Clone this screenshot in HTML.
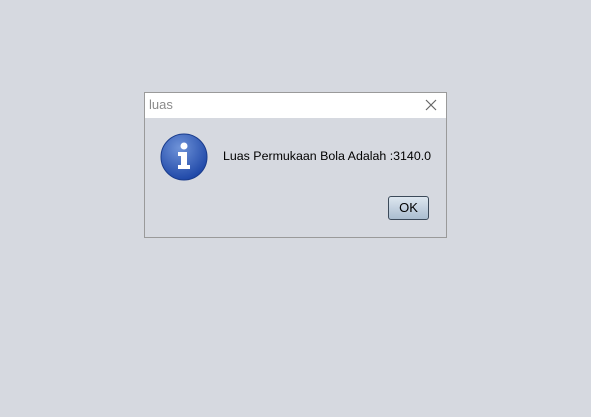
<!DOCTYPE html>
<html><head><style>
body{margin:0;width:591px;height:417px;background:#d6d9e0;position:relative;overflow:hidden;font-family:"Liberation Sans",sans-serif}
.dlg{position:absolute;left:144px;top:92px;width:301px;height:144px;border:1px solid #9a9a9a;background:#d6d9e0}
.tb{position:absolute;left:0;top:0;width:301px;height:25px;background:#fff}
.tt{position:absolute;left:4px;top:4px;font-size:13px;color:#8a8a8a}
.msg{position:absolute;left:78px;top:56px;font-size:12.4px;color:#000}
.ok{position:absolute;left:243px;top:103px;width:41px;height:24px;border:1px solid #3c4a5a;border-radius:3px;background:linear-gradient(#dde6ef,#aabdd0);font-size:13px;text-align:center;line-height:22px;box-sizing:border-box}
</style></head><body>
<div class="dlg">
<div class="tb"><span class="tt">luas</span>
<svg style="position:absolute;left:280px;top:6px" width="12" height="12"><path d="M1 1L11 11M11 1L1 11" stroke="#666" stroke-width="1.2"/></svg></div>
<svg style="position:absolute;left:15px;top:40px" width="48" height="48">
<defs><radialGradient id="g" cx="40%" cy="30%" r="70%"><stop offset="0" stop-color="#6f93d8"/><stop offset="1" stop-color="#1f48a8"/></radialGradient></defs>
<circle cx="24" cy="24" r="23" fill="url(#g)" stroke="#1a3c8c"/>
<circle cx="24" cy="13" r="3.5" fill="#fff"/>
<path d="M18 19h9v13h3v4H18v-4h3v-9h-3z" fill="#fff"/>
</svg>
<div class="msg">Luas Permukaan Bola Adalah :3140.0</div>
<div class="ok">OK</div>
</div>
</body></html>
